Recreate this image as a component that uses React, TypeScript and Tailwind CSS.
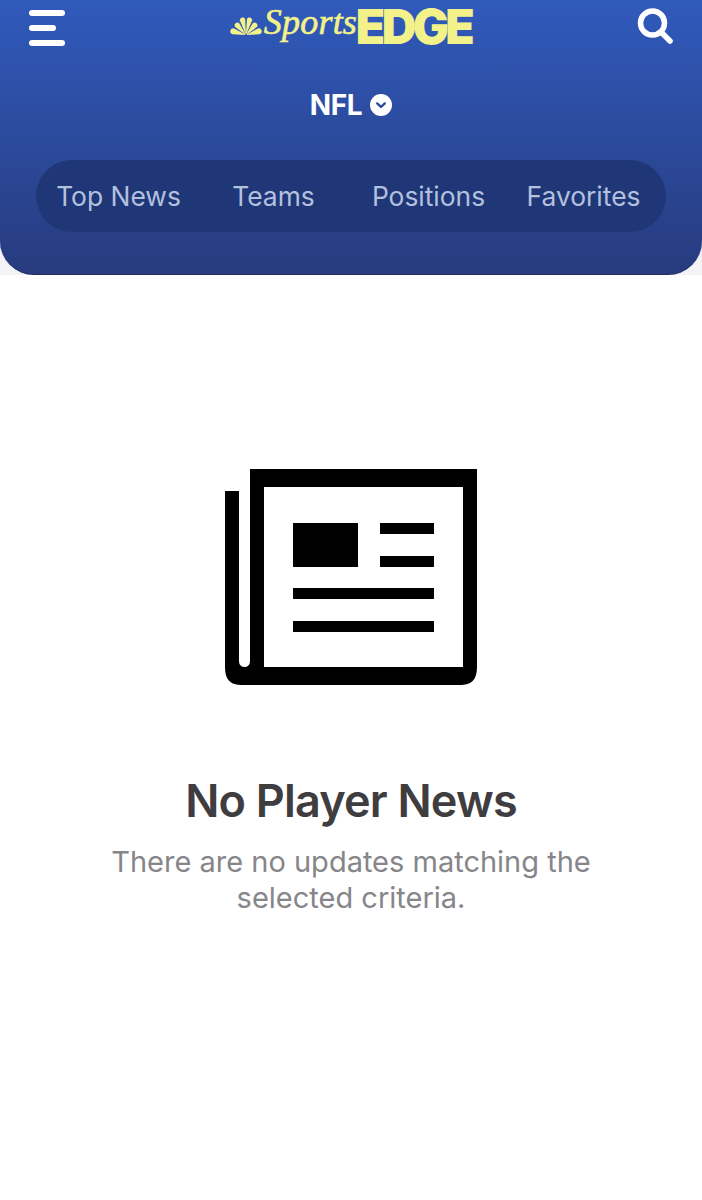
export default function App() {
  const tabs = [
    { label: "Top News", cls: "w-[165px]" },
    { label: "Teams", cls: "w-[145px]" },
    { label: "Positions", cls: "w-[165px]" },
    { label: "Favorites", cls: "w-[145px]" },
  ];
  return (
    <div className="w-[702px] h-[1200px] bg-white overflow-hidden font-['Inter',sans-serif]">
      <div className="bg-[#f2f2f7]">
        <header className="h-[275px] rounded-b-[34px] bg-gradient-to-b from-[#305abc] to-[#273b7e] border-b border-[#1f2f66] flex flex-col">
          <div className="h-[50px] pl-[29px] pr-[29px] flex items-start justify-between">
            <div className="mt-[10px] flex flex-col items-start gap-[9px] w-[36px]">
              <span className="block w-[36px] h-[6px] rounded-full bg-white" />
              <span className="block w-[27px] h-[6px] rounded-full bg-white" />
              <span className="block w-[36px] h-[6px] rounded-full bg-white" />
            </div>
            <div className="h-[50px] ml-[3px] flex items-center">
              <svg width="32" height="20" viewBox="-16 -20 32 20" className="mr-[2px]" fill="#f3f28a">
                <path transform="rotate(-13)" d="M-.2 -1 L-2.7 -15.8 A2.8 2.8 0 0 1 2.7 -15.8 L.2 -1 Z" />
                <path transform="rotate(13)" d="M-.2 -1 L-2.7 -15.8 A2.8 2.8 0 0 1 2.7 -15.8 L.2 -1 Z" />
                <path transform="rotate(-42)" d="M-.2 -1 L-2.8 -13.5 A2.9 2.9 0 0 1 2.8 -13.5 L.2 -1 Z" />
                <path transform="rotate(42)" d="M-.2 -1 L-2.8 -13.5 A2.9 2.9 0 0 1 2.8 -13.5 L.2 -1 Z" />
                <path transform="rotate(-74)" d="M-.2 -1 L-3 -13.2 A3 3 0 0 1 3 -13.2 L.2 -1 Z" />
                <path transform="rotate(74)" d="M-.2 -1 L-3 -13.2 A3 3 0 0 1 3 -13.2 L.2 -1 Z" />
              </svg>
              <span className="mt-[-7px] w-[92px] font-['Liberation_Serif',serif] italic text-[36px] leading-[50px] tracking-[0.2px] text-[#f3f28a] [-webkit-text-stroke:0.6px_#f3f28a]">
                Sports
              </span>
              <span className="font-['Inter',sans-serif] font-black text-[48px] leading-[50px] mt-[4px] tracking-[-3.6px] pr-[4px] whitespace-nowrap text-[#f3f28a]">
                EDGE
              </span>
            </div>
            <svg width="36" height="36" viewBox="0 0 36 36" className="mt-[8px]" fill="none" stroke="white">
              <circle cx="15.5" cy="15" r="12" strokeWidth="5.5" />
              <path d="M24.5 24.5 L33 33" strokeWidth="5.5" strokeLinecap="round" />
            </svg>
          </div>
          <div className="mt-[38px] h-[34px] flex items-center justify-center gap-[8px]">
            <span className="text-[28px] leading-[34px] font-bold tracking-[-0.4px] text-white">NFL</span>
            <svg width="22" height="22" viewBox="0 0 22 22">
              <circle cx="11" cy="11" r="11" fill="white" />
              <path d="M7.2 9.4 L11 13 L14.8 9.4" fill="none" stroke="#2c4ca0" strokeWidth="2.4" strokeLinecap="round" strokeLinejoin="round" />
            </svg>
          </div>
          <nav className="mt-[38px] mx-[36px] h-[72px] rounded-full bg-[#1f3777] flex items-center">
            {tabs.map((t) => (
              <span key={t.label} className={`${t.cls} text-center text-[26.4px] leading-[38px] text-[#b4c0de]`}>
                {t.label}
              </span>
            ))}
          </nav>
        </header>
      </div>
      <main className="flex flex-col items-center pt-[194px]">
        <svg width="252" height="216" viewBox="0 0 252 216">
          <path
            fillRule="evenodd"
            d="M25 0 H252 V197 C252 211 247 216 234 216 H18 C5 216 0 211 0 197 V22 H14 V192.5 A5.5 5.5 0 0 0 25 192.5 Z M39 18 V198 H238 V18 Z"
            fill="#000"
          />
          <rect x="68" y="54" width="65" height="44" fill="#000" />
          <rect x="155" y="54" width="54" height="11" fill="#000" />
          <rect x="155" y="87" width="54" height="11" fill="#000" />
          <rect x="68" y="119" width="141" height="11" fill="#000" />
          <rect x="68" y="152" width="141" height="11" fill="#000" />
        </svg>
        <h1 className="mt-[86px] text-[45px] leading-[60px] font-semibold tracking-[-0.8px] text-[#3f3d3f]">No Player News</h1>
        <p className="mt-[13px] w-[520px] text-center text-[29px] leading-[36px] text-[#86868a]">
          There are no updates matching the selected criteria.
        </p>
      </main>
    </div>
  );
}
